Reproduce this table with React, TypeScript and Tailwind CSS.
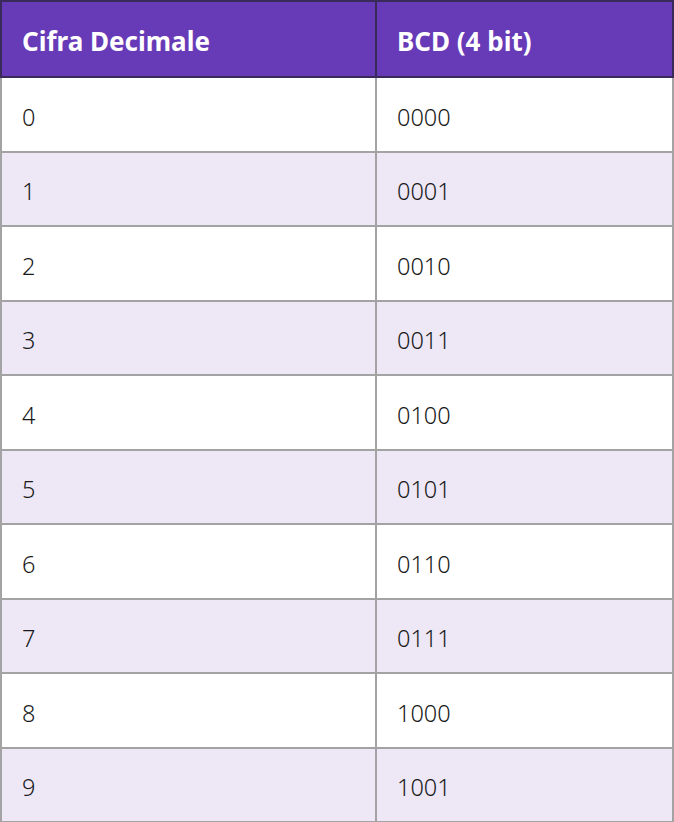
import React from "react";

const rows = [
  ["0", "0000"],
  ["1", "0001"],
  ["2", "0010"],
  ["3", "0011"],
  ["4", "0100"],
  ["5", "0101"],
  ["6", "0110"],
  ["7", "0111"],
  ["8", "1000"],
  ["9", "1001"],
];

export default function App() {
  return (
    <div className="w-[674px] bg-white" style={{ fontFamily: '"Noto Sans", "Open Sans", sans-serif' }}>
      <table className="w-full border-collapse text-[23.5px] text-[#1a1a1a]">
        <thead>
          <tr className="bg-[#673ab7] text-white">
            <th className="h-[76px] w-[375px] border-2 border-[#3a2a5a] pl-[20px] pt-[4px] text-left text-[26px] font-bold">Cifra Decimale</th>
            <th className="h-[76px] border-2 border-[#3a2a5a] pl-[20px] pt-[4px] text-left text-[26px] font-bold">BCD (4 bit)</th>
          </tr>
        </thead>
        <tbody>
          {rows.map(([d, b], i) => (
            <tr key={d} className={i % 2 === 1 ? "bg-[#ede7f6]" : "bg-white"}>
              <td className="h-[74.5px] border-2 border-[#a3a3a3] pl-[20px] pt-[6px] font-light">{d}</td>
              <td className="h-[74.5px] border-2 border-[#a3a3a3] pl-[20px] pt-[6px] font-light">{b}</td>
            </tr>
          ))}
        </tbody>
      </table>
    </div>
  );
}
